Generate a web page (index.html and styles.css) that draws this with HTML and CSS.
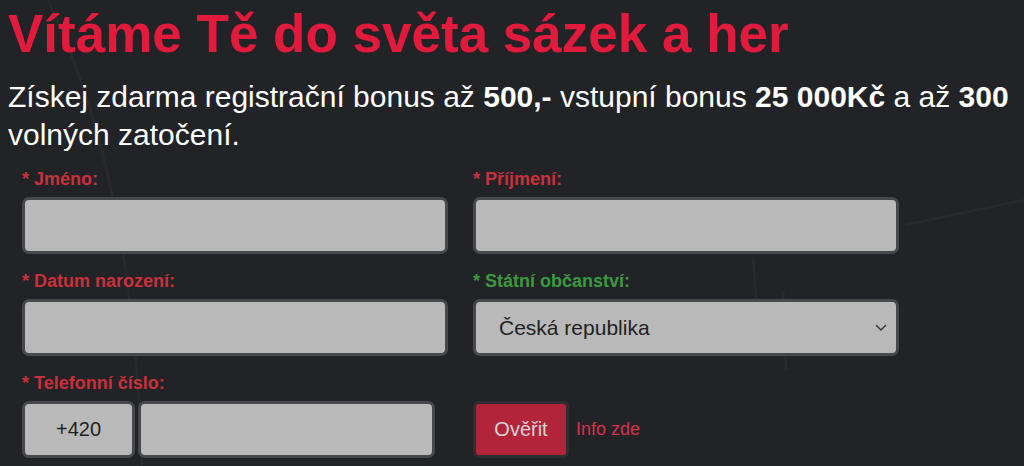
FILE: index.html
```html
<!DOCTYPE html>
<html lang="cs">
<head>
<meta charset="utf-8">
<title>Registrace</title>
<link rel="stylesheet" href="styles.css">
</head>
<body>
<svg class="bg-lines" width="1024" height="466" viewBox="0 0 1024 466" aria-hidden="true">
  <path d="M48 0 C 100 110, 135 250, 142 466" />
  <path d="M905 225 L 1024 200" />
  <path d="M753 257 L 756 298" />
  <path d="M783 290 L 786 370" />
</svg>
<main class="page">
  <h1 class="title">Vítáme Tě do světa sázek a her</h1>
  <p class="lead">Získej zdarma registrační bonus až <b>500,-</b> vstupní bonus <b>25 000Kč</b> a až <b>300</b> volných zatočení.</p>

  <form class="form">
    <div class="field">
      <label class="label">* Jméno:</label>
      <input class="input" type="text">
    </div>
    <div class="field">
      <label class="label">* Příjmení:</label>
      <input class="input" type="text">
    </div>
    <div class="field">
      <label class="label">* Datum narození:</label>
      <input class="input" type="text">
    </div>
    <div class="field">
      <label class="label label-ok">* Státní občanství:</label>
      <div class="select">
        <span class="select-value">Česká republika</span>
        <svg class="chevron" width="12" height="7" viewBox="0 0 12 7"><path d="M1 1 L6 6 L11 1" /></svg>
      </div>
    </div>
    <div class="field">
      <label class="label">* Telefonní číslo:</label>
      <div class="phone">
        <div class="input prefix">+420</div>
        <input class="input number" type="text">
      </div>
    </div>
    <div class="field field-verify">
      <div class="verify">
        <button class="btn" type="button">Ověřit</button>
        <a class="info">Info zde</a>
      </div>
    </div>
  </form>
</main>
</body>
</html>
```
FILE: styles.css
```css
html, body {
  margin: 0;
  padding: 0;
}

body {
  background: #212326;
  width: 1024px;
  height: 466px;
  overflow: hidden;
  position: relative;
  font-family: "Liberation Sans", Arial, sans-serif;
}

/* faint decorative strokes behind the content */
.bg-lines {
  position: absolute;
  left: 0;
  top: 0;
  pointer-events: none;
}

.bg-lines path {
  fill: none;
  stroke: #26292d;
  stroke-width: 3;
}

.page {
  position: relative;
  padding: 0 8px;
}

.title {
  margin: 0;
  padding-top: 6px;
  color: #e21b3c;
  font-size: 53px;
  line-height: 56px;
  font-weight: bold;
}

.lead {
  margin: 16px 0 0;
  color: #ffffff;
  font-size: 30px;
  line-height: 38px;
}

.lead b {
  font-weight: bold;
}

.form {
  display: grid;
  grid-template-columns: 426px 426px;
  column-gap: 25px;
  row-gap: 17px;
  padding: 0 0 0 14px;
  margin-top: 15px;
}

.field {
  display: flex;
  flex-direction: column;
}

.label {
  color: #c9303b;
  font-size: 18px;
  font-weight: bold;
  line-height: 20px;
  height: 20px;
  margin-bottom: 8px;
}

.label-ok {
  color: #3a9a3e;
}

.input {
  box-sizing: border-box;
  height: 57px;
  background: #b9b9b9;
  border: 3px solid #46484b;
  border-radius: 7px;
  margin: 0;
  padding: 0 20px;
  font-family: inherit;
  font-size: 20px;
  color: #222;
  outline: none;
}

.select {
  box-sizing: border-box;
  height: 57px;
  background: #b9b9b9;
  border: 3px solid #46484b;
  border-radius: 7px;
  display: flex;
  align-items: center;
  justify-content: space-between;
  padding: 0 9px 0 23px;
}

.select-value {
  font-size: 21px;
  color: #222;
}

.chevron path {
  fill: none;
  stroke: #333;
  stroke-width: 1.4;
}

.phone {
  display: flex;
  gap: 3px;
}

.prefix {
  width: 113px;
  display: flex;
  align-items: center;
  justify-content: center;
  padding: 0;
}

.number {
  width: 297px;
}

.field-verify {
  justify-content: flex-end;
}

.verify {
  display: flex;
  align-items: center;
  gap: 7px;
}

.btn {
  box-sizing: border-box;
  width: 96px;
  height: 57px;
  background: #b3243a;
  border: 3px solid #2d2f33;
  border-radius: 6px;
  color: #d4d4d4;
  font-family: inherit;
  font-size: 20px;
  padding: 0;
}

.info {
  color: #d9304a;
  font-size: 18px;
}
```
